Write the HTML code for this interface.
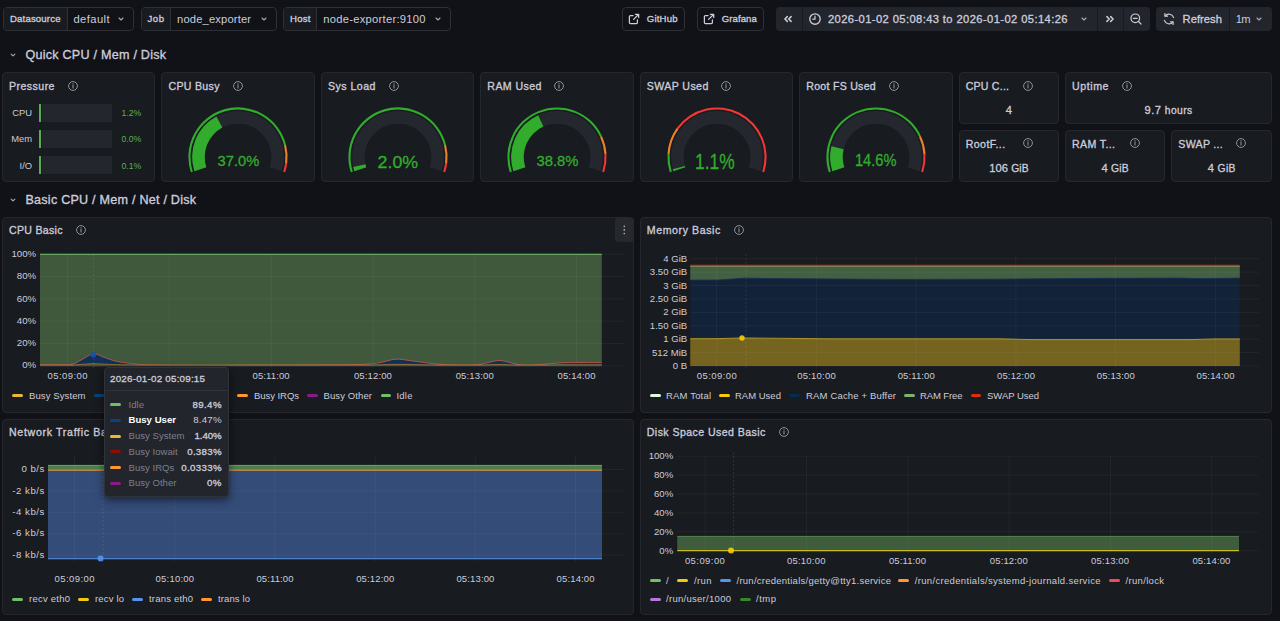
<!DOCTYPE html><html><head><meta charset="utf-8"><title>Node Exporter Full</title><style>html,body{margin:0;padding:0;background:#111217;}
body{width:1280px;height:621px;overflow:hidden;position:relative;font-family:"Liberation Sans", sans-serif;}
body>div,body>svg,body>span{position:absolute;box-sizing:border-box;}
body>span{white-space:pre;}
svg{overflow:visible;}</style></head><body><div style="left:3.00px;top:6.70px;width:131.40px;height:24.20px;background:#111217;border:1px solid #2e3036;border-radius:4px;"></div>
<div style="left:4.00px;top:7.7px;width:63.75px;height:22.20px;background:#181b1f;border-right:1px solid #2e3036;border-radius:3px 0 0 3px"></div>
<span id="t0" style="top:11.90px;font-size:9.6px;font-weight:400;color:rgb(204,204,220);line-height:14px;letter-spacing:0.160px;-webkit-text-stroke:0.32px rgb(204,204,220);left:10.00px;">Datasource</span>
<span id="t1" style="top:11.90px;font-size:11.2px;font-weight:400;color:rgb(204,204,220);line-height:14px;letter-spacing:0.401px;left:73.50px;">default</span>
<svg style="left:116.30px;top:14.20px;" width="10.00" height="10.00" viewBox="0 0 10.00 10.00"><path d="M3.00 4.00 L5 6.00 L7.00 4.00" fill="none" stroke="rgba(204,204,220,0.8)" stroke-width="1.1" stroke-linecap="round" stroke-linejoin="round"/></svg>
<div style="left:141.00px;top:6.70px;width:136.00px;height:24.20px;background:#111217;border:1px solid #2e3036;border-radius:4px;"></div>
<div style="left:142.00px;top:7.7px;width:29.00px;height:22.20px;background:#181b1f;border-right:1px solid #2e3036;border-radius:3px 0 0 3px"></div>
<span id="t2" style="top:11.90px;font-size:9.6px;font-weight:400;color:rgb(204,204,220);line-height:14px;letter-spacing:0.516px;-webkit-text-stroke:0.32px rgb(204,204,220);left:147.50px;">Job</span>
<span id="t3" style="top:11.90px;font-size:11.2px;font-weight:400;color:rgb(204,204,220);line-height:14px;letter-spacing:0.154px;left:177.00px;">node_exporter</span>
<svg style="left:258.70px;top:14.20px;" width="10.00" height="10.00" viewBox="0 0 10.00 10.00"><path d="M3.00 4.00 L5 6.00 L7.00 4.00" fill="none" stroke="rgba(204,204,220,0.8)" stroke-width="1.1" stroke-linecap="round" stroke-linejoin="round"/></svg>
<div style="left:283.00px;top:6.70px;width:167.50px;height:24.20px;background:#111217;border:1px solid #2e3036;border-radius:4px;"></div>
<div style="left:284.00px;top:7.7px;width:33.00px;height:22.20px;background:#181b1f;border-right:1px solid #2e3036;border-radius:3px 0 0 3px"></div>
<span id="t4" style="top:11.90px;font-size:9.6px;font-weight:400;color:rgb(204,204,220);line-height:14px;letter-spacing:0.255px;-webkit-text-stroke:0.32px rgb(204,204,220);left:290.00px;">Host</span>
<span id="t5" style="top:11.90px;font-size:11.2px;font-weight:400;color:rgb(204,204,220);line-height:14px;letter-spacing:0.270px;left:323.25px;">node-exporter:9100</span>
<svg style="left:432.50px;top:14.20px;" width="10.00" height="10.00" viewBox="0 0 10.00 10.00"><path d="M3.00 4.00 L5 6.00 L7.00 4.00" fill="none" stroke="rgba(204,204,220,0.8)" stroke-width="1.1" stroke-linecap="round" stroke-linejoin="round"/></svg>
<div style="left:622.00px;top:6.70px;width:62.50px;height:24.20px;background:#111217;border:1px solid #2e3036;border-radius:4px;"></div>
<svg style="left:628.30px;top:12.90px;" width="12.00" height="12.00" viewBox="0 0 12.00 12.00"><path d="M9.4 6.9V9.6a1 1 0 0 1-1 1H2.4a1 1 0 0 1-1-1V3.6a1 1 0 0 1 1-1H5.1" fill="none" stroke="rgb(204,204,220)" stroke-width="1.25" stroke-linecap="round"/><path d="M7.4 1.3H10.7V4.6M10.5 1.5L5.6 6.4" fill="none" stroke="rgb(204,204,220)" stroke-width="1.25" stroke-linecap="round" stroke-linejoin="round"/></svg>
<span id="t6" style="top:11.90px;font-size:9.6px;font-weight:400;color:rgb(204,204,220);line-height:14px;letter-spacing:0.178px;-webkit-text-stroke:0.32px rgb(204,204,220);left:646.75px;">GitHub</span>
<div style="left:696.50px;top:6.70px;width:67.50px;height:24.20px;background:#111217;border:1px solid #2e3036;border-radius:4px;"></div>
<svg style="left:703.30px;top:12.90px;" width="12.00" height="12.00" viewBox="0 0 12.00 12.00"><path d="M9.4 6.9V9.6a1 1 0 0 1-1 1H2.4a1 1 0 0 1-1-1V3.6a1 1 0 0 1 1-1H5.1" fill="none" stroke="rgb(204,204,220)" stroke-width="1.25" stroke-linecap="round"/><path d="M7.4 1.3H10.7V4.6M10.5 1.5L5.6 6.4" fill="none" stroke="rgb(204,204,220)" stroke-width="1.25" stroke-linecap="round" stroke-linejoin="round"/></svg>
<span id="t7" style="top:11.90px;font-size:9.6px;font-weight:400;color:rgb(204,204,220);line-height:14px;letter-spacing:0.055px;-webkit-text-stroke:0.32px rgb(204,204,220);left:721.75px;">Grafana</span>
<div style="left:775.50px;top:6.70px;width:374.50px;height:24.20px;background:#22252b;border-radius:4px;"></div>
<div style="left:801.5px;top:6.7px;width:1px;height:24.2px;background:#181b1f"></div>
<div style="left:1097px;top:6.7px;width:1px;height:24.2px;background:#181b1f"></div>
<div style="left:1123px;top:6.7px;width:1px;height:24.2px;background:#181b1f"></div>
<svg style="left:782.00px;top:12.90px;" width="12.00" height="12.00" viewBox="0 0 12.00 12.00"><path d="M5.30 3.60 L2.90 6 L5.30 8.40 M9.10 3.60 L6.70 6 L9.10 8.40" fill="none" stroke="rgb(204,204,220)" stroke-width="1.5" stroke-linecap="round" stroke-linejoin="round"/></svg>
<svg style="left:807.60px;top:11.90px;" width="14.00" height="14.00" viewBox="0 0 14.00 14.00"><circle cx="7" cy="7" r="5.2" fill="none" stroke="rgb(204,204,220)" stroke-width="1.35"/><path d="M7 4.1V7.2H4.8" fill="none" stroke="rgb(204,204,220)" stroke-width="1.2" stroke-linecap="round" stroke-linejoin="round"/></svg>
<span id="t8" style="top:11.90px;font-size:11.2px;font-weight:400;color:rgb(204,204,220);line-height:14px;letter-spacing:0.394px;-webkit-text-stroke:0.32px rgb(204,204,220);left:828.00px;">2026-01-02 05:08:43 to 2026-01-02 05:14:26</span>
<svg style="left:1079.20px;top:14.20px;" width="10.00" height="10.00" viewBox="0 0 10.00 10.00"><path d="M3.00 4.00 L5 6.00 L7.00 4.00" fill="none" stroke="rgba(204,204,220,0.8)" stroke-width="1.1" stroke-linecap="round" stroke-linejoin="round"/></svg>
<svg style="left:1103.60px;top:12.90px;" width="12.00" height="12.00" viewBox="0 0 12.00 12.00"><path d="M2.90 3.60 L5.30 6 L2.90 8.40 M6.70 3.60 L9.10 6 L6.70 8.40" fill="none" stroke="rgb(204,204,220)" stroke-width="1.5" stroke-linecap="round" stroke-linejoin="round"/></svg>
<svg style="left:1129.00px;top:12.10px;" width="14.00" height="14.00" viewBox="0 0 14.00 14.00"><circle cx="6.3" cy="6.3" r="4.3" fill="none" stroke="rgb(204,204,220)" stroke-width="1.2"/><path d="M9.5 9.5L12 12M4.4 6.3H8.2" fill="none" stroke="rgb(204,204,220)" stroke-width="1.2" stroke-linecap="round"/></svg>
<div style="left:1156.00px;top:6.70px;width:116.00px;height:24.20px;background:#22252b;border-radius:4px;"></div>
<div style="left:1229px;top:6.7px;width:1px;height:24.2px;background:#181b1f"></div>
<svg style="left:1162.00px;top:11.90px;" width="14.00" height="14.00" viewBox="0 0 14.00 14.00"><path d="M11.6 5.6A4.9 4.9 0 0 0 3.2 3.9M2.4 8.4A4.9 4.9 0 0 0 10.8 10.1" fill="none" stroke="rgb(204,204,220)" stroke-width="1.2" stroke-linecap="round"/><path d="M2.9 1.6V4.2H5.5M11.1 12.4V9.8H8.5" fill="none" stroke="rgb(204,204,220)" stroke-width="1.2" stroke-linecap="round" stroke-linejoin="round"/></svg>
<span id="t9" style="top:11.90px;font-size:11.2px;font-weight:400;color:rgb(204,204,220);line-height:14px;letter-spacing:0.052px;-webkit-text-stroke:0.32px rgb(204,204,220);left:1182.50px;">Refresh</span>
<span id="t10" style="top:11.90px;font-size:11.2px;font-weight:400;color:rgb(204,204,220);line-height:14px;letter-spacing:-0.600px;left:1235.75px;">1m</span>
<svg style="left:1253.80px;top:14.20px;" width="10.00" height="10.00" viewBox="0 0 10.00 10.00"><path d="M3.00 4.00 L5 6.00 L7.00 4.00" fill="none" stroke="rgba(204,204,220,0.8)" stroke-width="1.1" stroke-linecap="round" stroke-linejoin="round"/></svg>
<svg style="left:8.20px;top:50.30px;" width="10.00" height="10.00" viewBox="0 0 10.00 10.00"><path d="M3.10 4.05 L5 5.95 L6.90 4.05" fill="none" stroke="rgba(204,204,220,0.8)" stroke-width="1.1" stroke-linecap="round" stroke-linejoin="round"/></svg>
<span id="t11" style="top:47.80px;font-size:12.6px;font-weight:400;color:rgb(204,204,220);line-height:14px;letter-spacing:0.226px;-webkit-text-stroke:0.32px rgb(204,204,220);left:25.50px;">Quick CPU / Mem / Disk</span>
<svg style="left:8.20px;top:194.60px;" width="10.00" height="10.00" viewBox="0 0 10.00 10.00"><path d="M3.10 4.05 L5 5.95 L6.90 4.05" fill="none" stroke="rgba(204,204,220,0.8)" stroke-width="1.1" stroke-linecap="round" stroke-linejoin="round"/></svg>
<span id="t12" style="top:192.80px;font-size:12.6px;font-weight:400;color:rgb(204,204,220);line-height:14px;letter-spacing:0.224px;-webkit-text-stroke:0.32px rgb(204,204,220);left:25.50px;">Basic CPU / Mem / Net / Disk</span>
<div style="left:2.00px;top:72.25px;width:153.45px;height:109.35px;background:#181b1f;border:1px solid #25272d;border-radius:4px;"></div>
<span id="t13" style="top:78.85px;font-size:10.6px;font-weight:400;color:rgb(204,204,220);line-height:14px;letter-spacing:0.444px;-webkit-text-stroke:0.32px rgb(204,204,220);left:9.00px;">Pressure</span>
<svg style="left:67.20px;top:79.55px;" width="12.00" height="12.00" viewBox="0 0 12.00 12.00"><circle cx="6" cy="6" r="4.4" fill="none" stroke="rgba(204,204,220,0.65)" stroke-width="1"/><path d="M6 5.6V8" stroke="rgba(204,204,220,0.65)" stroke-width="1.1" stroke-linecap="round"/><circle cx="6" cy="4" r="0.65" fill="rgba(204,204,220,0.65)"/></svg>
<span id="t14" style="top:106.20px;font-size:9.4px;font-weight:400;color:rgb(204,204,220);line-height:14px;right:1247.90px;">CPU</span>
<div style="left:41.6px;top:104px;width:70.6px;height:18.2px;background:#23262d;border-radius:1px"></div>
<div style="left:38.7px;top:104px;width:2.6px;height:18.2px;background:rgb(86,176,80)"></div>
<span id="t15" style="top:106.20px;font-size:8.7px;font-weight:400;color:rgb(88,178,82);line-height:14px;right:1138.80px;">1.2%</span>
<span id="t16" style="top:132.20px;font-size:9.4px;font-weight:400;color:rgb(204,204,220);line-height:14px;right:1247.90px;">Mem</span>
<div style="left:41.6px;top:130px;width:70.6px;height:18.2px;background:#23262d;border-radius:1px"></div>
<div style="left:38.7px;top:130px;width:2.6px;height:18.2px;background:rgb(86,176,80)"></div>
<span id="t17" style="top:132.20px;font-size:8.7px;font-weight:400;color:rgb(88,178,82);line-height:14px;right:1138.80px;">0.0%</span>
<span id="t18" style="top:158.50px;font-size:9.4px;font-weight:400;color:rgb(204,204,220);line-height:14px;right:1247.90px;">I/O</span>
<div style="left:41.6px;top:156.3px;width:70.6px;height:18.2px;background:#23262d;border-radius:1px"></div>
<div style="left:38.7px;top:156.3px;width:2.6px;height:18.2px;background:rgb(86,176,80)"></div>
<span id="t19" style="top:158.50px;font-size:8.7px;font-weight:400;color:rgb(88,178,82);line-height:14px;right:1138.80px;">0.1%</span>
<div style="left:161.45px;top:72.25px;width:153.45px;height:109.35px;background:#181b1f;border:1px solid #25272d;border-radius:4px;"></div>
<span id="t20" style="top:78.85px;font-size:10.6px;font-weight:400;color:rgb(204,204,220);line-height:14px;letter-spacing:0.304px;-webkit-text-stroke:0.32px rgb(204,204,220);left:168.45px;">CPU Busy</span>
<svg style="left:232.40px;top:79.55px;" width="12.00" height="12.00" viewBox="0 0 12.00 12.00"><circle cx="6" cy="6" r="4.4" fill="none" stroke="rgba(204,204,220,0.65)" stroke-width="1"/><path d="M6 5.6V8" stroke="rgba(204,204,220,0.65)" stroke-width="1.1" stroke-linecap="round"/><circle cx="6" cy="4" r="0.65" fill="rgba(204,204,220,0.65)"/></svg>
<svg style="left:183.32px;top:104.60px;" width="110.00" height="80.00" viewBox="0 0 110.00 80.00"><path d="M11.35 66.18 A45.9 45.9 0 1 1 98.65 66.18 L86.67 62.29 A33.3 33.3 0 1 0 23.33 62.29 Z" fill="#25272e"/><path d="M11.35 66.18 A45.9 45.9 0 0 1 33.39 11.50 L39.33 22.62 A33.3 33.3 0 0 0 23.33 62.29 Z" fill="rgb(50,172,45)"/><path d="M7.83 67.33 A49.6 49.6 0 1 1 103.04 39.66 L101.01 40.19 A47.5 47.5 0 1 0 9.82 66.68 Z" fill="rgb(50,172,45)"/><path d="M103.04 39.66 A49.6 49.6 0 0 1 104.21 58.22 L102.13 57.95 A47.5 47.5 0 0 0 101.01 40.19 Z" fill="rgb(237,129,40)"/><path d="M104.21 58.22 A49.6 49.6 0 0 1 102.17 67.33 L100.18 66.68 A47.5 47.5 0 0 0 102.13 57.95 Z" fill="rgb(245,54,54)"/></svg>
<span id="t21" style="top:153.90px;font-size:14.4px;font-weight:400;color:rgb(50,172,45);line-height:14px;left:88.02px;width:300px;text-align:center;-webkit-text-stroke:0.3px rgb(50,172,45);"><span style="display:inline-block;transform:scaleX(1.019);transform-origin:50% 50%">37.0%</span></span>
<div style="left:320.90px;top:72.25px;width:153.45px;height:109.35px;background:#181b1f;border:1px solid #25272d;border-radius:4px;"></div>
<span id="t22" style="top:78.85px;font-size:10.6px;font-weight:400;color:rgb(204,204,220);line-height:14px;letter-spacing:0.475px;-webkit-text-stroke:0.32px rgb(204,204,220);left:327.90px;">Sys Load</span>
<svg style="left:387.60px;top:79.55px;" width="12.00" height="12.00" viewBox="0 0 12.00 12.00"><circle cx="6" cy="6" r="4.4" fill="none" stroke="rgba(204,204,220,0.65)" stroke-width="1"/><path d="M6 5.6V8" stroke="rgba(204,204,220,0.65)" stroke-width="1.1" stroke-linecap="round"/><circle cx="6" cy="4" r="0.65" fill="rgba(204,204,220,0.65)"/></svg>
<svg style="left:342.77px;top:104.60px;" width="110.00" height="80.00" viewBox="0 0 110.00 80.00"><path d="M11.35 66.18 A45.9 45.9 0 1 1 98.65 66.18 L86.67 62.29 A33.3 33.3 0 1 0 23.33 62.29 Z" fill="#25272e"/><path d="M11.35 66.18 A45.9 45.9 0 0 1 10.21 62.01 L22.50 59.26 A33.3 33.3 0 0 0 23.33 62.29 Z" fill="rgb(50,172,45)"/><path d="M7.83 67.33 A49.6 49.6 0 1 1 103.04 39.66 L101.01 40.19 A47.5 47.5 0 1 0 9.82 66.68 Z" fill="rgb(50,172,45)"/><path d="M103.04 39.66 A49.6 49.6 0 0 1 104.21 58.22 L102.13 57.95 A47.5 47.5 0 0 0 101.01 40.19 Z" fill="rgb(237,129,40)"/><path d="M104.21 58.22 A49.6 49.6 0 0 1 102.17 67.33 L100.18 66.68 A47.5 47.5 0 0 0 102.13 57.95 Z" fill="rgb(245,54,54)"/></svg>
<span id="t23" style="top:154.60px;font-size:17.4px;font-weight:400;color:rgb(50,172,45);line-height:14px;left:247.47px;width:300px;text-align:center;-webkit-text-stroke:0.3px rgb(50,172,45);"><span style="display:inline-block;transform:scaleX(1.022);transform-origin:50% 50%">2.0%</span></span>
<div style="left:480.35px;top:72.25px;width:153.45px;height:109.35px;background:#181b1f;border:1px solid #25272d;border-radius:4px;"></div>
<span id="t24" style="top:78.85px;font-size:10.6px;font-weight:400;color:rgb(204,204,220);line-height:14px;letter-spacing:0.397px;-webkit-text-stroke:0.32px rgb(204,204,220);left:487.35px;">RAM Used</span>
<svg style="left:553.30px;top:79.55px;" width="12.00" height="12.00" viewBox="0 0 12.00 12.00"><circle cx="6" cy="6" r="4.4" fill="none" stroke="rgba(204,204,220,0.65)" stroke-width="1"/><path d="M6 5.6V8" stroke="rgba(204,204,220,0.65)" stroke-width="1.1" stroke-linecap="round"/><circle cx="6" cy="4" r="0.65" fill="rgba(204,204,220,0.65)"/></svg>
<svg style="left:502.22px;top:104.60px;" width="110.00" height="80.00" viewBox="0 0 110.00 80.00"><path d="M11.35 66.18 A45.9 45.9 0 1 1 98.65 66.18 L86.67 62.29 A33.3 33.3 0 1 0 23.33 62.29 Z" fill="#25272e"/><path d="M11.35 66.18 A45.9 45.9 0 0 1 36.19 10.13 L41.35 21.62 A33.3 33.3 0 0 0 23.33 62.29 Z" fill="rgb(50,172,45)"/><path d="M7.83 67.33 A49.6 49.6 0 0 1 99.88 30.88 L97.98 31.78 A47.5 47.5 0 0 0 9.82 66.68 Z" fill="rgb(50,172,45)"/><path d="M99.88 30.88 A49.6 49.6 0 0 1 104.50 48.89 L102.41 49.02 A47.5 47.5 0 0 0 97.98 31.78 Z" fill="rgb(237,129,40)"/><path d="M104.50 48.89 A49.6 49.6 0 0 1 102.17 67.33 L100.18 66.68 A47.5 47.5 0 0 0 102.41 49.02 Z" fill="rgb(245,54,54)"/></svg>
<span id="t25" style="top:153.90px;font-size:14.4px;font-weight:400;color:rgb(50,172,45);line-height:14px;left:406.92px;width:300px;text-align:center;-webkit-text-stroke:0.3px rgb(50,172,45);"><span style="display:inline-block;transform:scaleX(1.029);transform-origin:50% 50%">38.8%</span></span>
<div style="left:639.80px;top:72.25px;width:153.45px;height:109.35px;background:#181b1f;border:1px solid #25272d;border-radius:4px;"></div>
<span id="t26" style="top:78.85px;font-size:10.6px;font-weight:400;color:rgb(204,204,220);line-height:14px;letter-spacing:0.400px;-webkit-text-stroke:0.32px rgb(204,204,220);left:646.80px;">SWAP Used</span>
<svg style="left:720.00px;top:79.55px;" width="12.00" height="12.00" viewBox="0 0 12.00 12.00"><circle cx="6" cy="6" r="4.4" fill="none" stroke="rgba(204,204,220,0.65)" stroke-width="1"/><path d="M6 5.6V8" stroke="rgba(204,204,220,0.65)" stroke-width="1.1" stroke-linecap="round"/><circle cx="6" cy="4" r="0.65" fill="rgba(204,204,220,0.65)"/></svg>
<svg style="left:661.67px;top:104.60px;" width="110.00" height="80.00" viewBox="0 0 110.00 80.00"><path d="M11.35 66.18 A45.9 45.9 0 1 1 98.65 66.18 L86.67 62.29 A33.3 33.3 0 1 0 23.33 62.29 Z" fill="#25272e"/><path d="M11.35 66.18 A45.9 45.9 0 0 1 10.80 64.36 L22.93 60.97 A33.3 33.3 0 0 0 23.33 62.29 Z" fill="rgb(50,172,45)"/><path d="M7.83 67.33 A49.6 49.6 0 0 1 5.50 48.89 L7.59 49.02 A47.5 47.5 0 0 0 9.82 66.68 Z" fill="rgb(50,172,45)"/><path d="M5.50 48.89 A49.6 49.6 0 0 1 14.87 22.85 L16.57 24.08 A47.5 47.5 0 0 0 7.59 49.02 Z" fill="rgb(237,129,40)"/><path d="M14.87 22.85 A49.6 49.6 0 0 1 102.17 67.33 L100.18 66.68 A47.5 47.5 0 0 0 16.57 24.08 Z" fill="rgb(245,54,54)"/></svg>
<span id="t27" style="top:155.00px;font-size:21.8px;font-weight:400;color:rgb(50,172,45);line-height:14px;left:565.27px;width:300px;text-align:center;-webkit-text-stroke:0.3px rgb(50,172,45);"><span style="display:inline-block;transform:scaleX(0.797);transform-origin:50% 50%">1.1%</span></span>
<div style="left:799.25px;top:72.25px;width:153.45px;height:109.35px;background:#181b1f;border:1px solid #25272d;border-radius:4px;"></div>
<span id="t28" style="top:78.85px;font-size:10.6px;font-weight:400;color:rgb(204,204,220);line-height:14px;letter-spacing:0.268px;-webkit-text-stroke:0.32px rgb(204,204,220);left:806.25px;">Root FS Used</span>
<svg style="left:888.30px;top:79.55px;" width="12.00" height="12.00" viewBox="0 0 12.00 12.00"><circle cx="6" cy="6" r="4.4" fill="none" stroke="rgba(204,204,220,0.65)" stroke-width="1"/><path d="M6 5.6V8" stroke="rgba(204,204,220,0.65)" stroke-width="1.1" stroke-linecap="round"/><circle cx="6" cy="4" r="0.65" fill="rgba(204,204,220,0.65)"/></svg>
<svg style="left:821.12px;top:104.60px;" width="110.00" height="80.00" viewBox="0 0 110.00 80.00"><path d="M11.35 66.18 A45.9 45.9 0 1 1 98.65 66.18 L86.67 62.29 A33.3 33.3 0 1 0 23.33 62.29 Z" fill="#25272e"/><path d="M11.35 66.18 A45.9 45.9 0 0 1 10.37 41.26 L22.62 44.21 A33.3 33.3 0 0 0 23.33 62.29 Z" fill="rgb(50,172,45)"/><path d="M7.83 67.33 A49.6 49.6 0 0 1 99.88 30.88 L97.98 31.78 A47.5 47.5 0 0 0 9.82 66.68 Z" fill="rgb(50,172,45)"/><path d="M99.88 30.88 A49.6 49.6 0 0 1 104.50 48.89 L102.41 49.02 A47.5 47.5 0 0 0 97.98 31.78 Z" fill="rgb(237,129,40)"/><path d="M104.50 48.89 A49.6 49.6 0 0 1 102.17 67.33 L100.18 66.68 A47.5 47.5 0 0 0 102.41 49.02 Z" fill="rgb(245,54,54)"/></svg>
<span id="t29" style="top:154.10px;font-size:16.0px;font-weight:400;color:rgb(50,172,45);line-height:14px;left:725.23px;width:300px;text-align:center;-webkit-text-stroke:0.3px rgb(50,172,45);"><span style="display:inline-block;transform:scaleX(0.912);transform-origin:50% 50%">14.6%</span></span>
<div style="left:958.70px;top:72.25px;width:100.30px;height:51.50px;background:#181b1f;border:1px solid #25272d;border-radius:4px;"></div>
<span id="t30" style="top:78.85px;font-size:10.6px;font-weight:400;color:rgb(204,204,220);line-height:14px;letter-spacing:0.215px;-webkit-text-stroke:0.32px rgb(204,204,220);left:965.70px;">CPU C...</span>
<svg style="left:1022.00px;top:79.55px;" width="12.00" height="12.00" viewBox="0 0 12.00 12.00"><circle cx="6" cy="6" r="4.4" fill="none" stroke="rgba(204,204,220,0.65)" stroke-width="1"/><path d="M6 5.6V8" stroke="rgba(204,204,220,0.65)" stroke-width="1.1" stroke-linecap="round"/><circle cx="6" cy="4" r="0.65" fill="rgba(204,204,220,0.65)"/></svg>
<span id="t31" style="top:103.45px;font-size:11px;font-weight:400;color:rgb(204,204,220);line-height:14px;-webkit-text-stroke:0.32px rgb(204,204,220);left:858.80px;width:300px;text-align:center;"><span style="font-size:11.2px">4</span></span>
<div style="left:1065.00px;top:72.25px;width:206.60px;height:51.50px;background:#181b1f;border:1px solid #25272d;border-radius:4px;"></div>
<span id="t32" style="top:78.85px;font-size:10.6px;font-weight:400;color:rgb(204,204,220);line-height:14px;letter-spacing:0.588px;-webkit-text-stroke:0.32px rgb(204,204,220);left:1072.00px;">Uptime</span>
<svg style="left:1121.00px;top:79.55px;" width="12.00" height="12.00" viewBox="0 0 12.00 12.00"><circle cx="6" cy="6" r="4.4" fill="none" stroke="rgba(204,204,220,0.65)" stroke-width="1"/><path d="M6 5.6V8" stroke="rgba(204,204,220,0.65)" stroke-width="1.1" stroke-linecap="round"/><circle cx="6" cy="4" r="0.65" fill="rgba(204,204,220,0.65)"/></svg>
<span id="t33" style="top:103.45px;font-size:11px;font-weight:400;color:rgb(204,204,220);line-height:14px;letter-spacing:0.439px;-webkit-text-stroke:0.32px rgb(204,204,220);left:1018.67px;width:300px;text-align:center;"><span style="font-size:11.2px">9.7</span><span style="font-size:10.3px"> hours</span></span>
<div style="left:958.70px;top:130.00px;width:100.30px;height:51.60px;background:#181b1f;border:1px solid #25272d;border-radius:4px;"></div>
<span id="t34" style="top:136.60px;font-size:10.6px;font-weight:400;color:rgb(204,204,220);line-height:14px;letter-spacing:0.426px;-webkit-text-stroke:0.32px rgb(204,204,220);left:965.70px;">RootF...</span>
<svg style="left:1022.00px;top:137.30px;" width="12.00" height="12.00" viewBox="0 0 12.00 12.00"><circle cx="6" cy="6" r="4.4" fill="none" stroke="rgba(204,204,220,0.65)" stroke-width="1"/><path d="M6 5.6V8" stroke="rgba(204,204,220,0.65)" stroke-width="1.1" stroke-linecap="round"/><circle cx="6" cy="4" r="0.65" fill="rgba(204,204,220,0.65)"/></svg>
<span id="t35" style="top:161.20px;font-size:11px;font-weight:400;color:rgb(204,204,220);line-height:14px;letter-spacing:0.116px;-webkit-text-stroke:0.32px rgb(204,204,220);left:858.96px;width:300px;text-align:center;"><span style="font-size:11.2px">106</span><span style="font-size:10.3px"> GiB</span></span>
<div style="left:1065.00px;top:130.00px;width:100.30px;height:51.60px;background:#181b1f;border:1px solid #25272d;border-radius:4px;"></div>
<span id="t36" style="top:136.60px;font-size:10.6px;font-weight:400;color:rgb(204,204,220);line-height:14px;letter-spacing:0.368px;-webkit-text-stroke:0.32px rgb(204,204,220);left:1072.00px;">RAM T...</span>
<svg style="left:1128.60px;top:137.30px;" width="12.00" height="12.00" viewBox="0 0 12.00 12.00"><circle cx="6" cy="6" r="4.4" fill="none" stroke="rgba(204,204,220,0.65)" stroke-width="1"/><path d="M6 5.6V8" stroke="rgba(204,204,220,0.65)" stroke-width="1.1" stroke-linecap="round"/><circle cx="6" cy="4" r="0.65" fill="rgba(204,204,220,0.65)"/></svg>
<span id="t37" style="top:161.20px;font-size:11px;font-weight:400;color:rgb(204,204,220);line-height:14px;letter-spacing:0.209px;-webkit-text-stroke:0.32px rgb(204,204,220);left:965.25px;width:300px;text-align:center;"><span style="font-size:11.2px">4</span><span style="font-size:10.3px"> GiB</span></span>
<div style="left:1171.30px;top:130.00px;width:100.30px;height:51.60px;background:#181b1f;border:1px solid #25272d;border-radius:4px;"></div>
<span id="t38" style="top:136.60px;font-size:10.6px;font-weight:400;color:rgb(204,204,220);line-height:14px;letter-spacing:0.301px;-webkit-text-stroke:0.32px rgb(204,204,220);left:1178.30px;">SWAP ...</span>
<svg style="left:1234.80px;top:137.30px;" width="12.00" height="12.00" viewBox="0 0 12.00 12.00"><circle cx="6" cy="6" r="4.4" fill="none" stroke="rgba(204,204,220,0.65)" stroke-width="1"/><path d="M6 5.6V8" stroke="rgba(204,204,220,0.65)" stroke-width="1.1" stroke-linecap="round"/><circle cx="6" cy="4" r="0.65" fill="rgba(204,204,220,0.65)"/></svg>
<span id="t39" style="top:161.20px;font-size:11px;font-weight:400;color:rgb(204,204,220);line-height:14px;letter-spacing:0.334px;-webkit-text-stroke:0.32px rgb(204,204,220);left:1071.77px;width:300px;text-align:center;"><span style="font-size:11.2px">4</span><span style="font-size:10.3px"> GiB</span></span>
<div style="left:2.00px;top:216.80px;width:631.80px;height:196.20px;background:#181b1f;border:1px solid #25272d;border-radius:4px;"></div>
<span id="t40" style="top:223.10px;font-size:10.6px;font-weight:400;color:rgb(204,204,220);line-height:14px;letter-spacing:0.285px;-webkit-text-stroke:0.32px rgb(204,204,220);left:9.00px;">CPU Basic</span>
<svg style="left:75.20px;top:223.80px;" width="12.00" height="12.00" viewBox="0 0 12.00 12.00"><circle cx="6" cy="6" r="4.4" fill="none" stroke="rgba(204,204,220,0.65)" stroke-width="1"/><path d="M6 5.6V8" stroke="rgba(204,204,220,0.65)" stroke-width="1.1" stroke-linecap="round"/><circle cx="6" cy="4" r="0.65" fill="rgba(204,204,220,0.65)"/></svg>
<div style="left:615.00px;top:217.80px;width:19.00px;height:23.80px;background:#26282e;border-radius:3px;"></div>
<svg style="left:615.00px;top:217.80px;" width="19.00" height="23.80" viewBox="0 0 19.00 23.80"><circle cx="9.3" cy="8.3" r="0.85" fill="rgba(204,204,220,0.8)"/><circle cx="9.3" cy="11.9" r="0.85" fill="rgba(204,204,220,0.8)"/><circle cx="9.3" cy="15.5" r="0.85" fill="rgba(204,204,220,0.8)"/></svg>
<span id="t41" style="top:246.90px;font-size:9.7px;font-weight:400;color:rgb(204,204,220);line-height:14px;right:1243.80px;">100%</span>
<span id="t42" style="top:269.20px;font-size:9.7px;font-weight:400;color:rgb(204,204,220);line-height:14px;right:1243.80px;">80%</span>
<span id="t43" style="top:291.50px;font-size:9.7px;font-weight:400;color:rgb(204,204,220);line-height:14px;right:1243.80px;">60%</span>
<span id="t44" style="top:313.80px;font-size:9.7px;font-weight:400;color:rgb(204,204,220);line-height:14px;right:1243.80px;">40%</span>
<span id="t45" style="top:336.10px;font-size:9.7px;font-weight:400;color:rgb(204,204,220);line-height:14px;right:1243.80px;">20%</span>
<span id="t46" style="top:358.40px;font-size:9.7px;font-weight:400;color:rgb(204,204,220);line-height:14px;right:1243.80px;">0%</span>
<svg style="left:0;top:0" width="1280" height="621" viewBox="0 0 1280 621"><rect x="40" y="254.25" width="561.75" height="111.5" fill="rgb(64,89,61)"/><path d="M40 254.25H601.75" stroke="rgb(115,191,105)" stroke-width="1.1"/><path d="M67.50 254.25V368.75" stroke="rgba(204,204,220,0.06)" stroke-width="1"/><path d="M169.30 254.25V368.75" stroke="rgba(204,204,220,0.06)" stroke-width="1"/><path d="M271.10 254.25V368.75" stroke="rgba(204,204,220,0.06)" stroke-width="1"/><path d="M372.90 254.25V368.75" stroke="rgba(204,204,220,0.06)" stroke-width="1"/><path d="M474.70 254.25V368.75" stroke="rgba(204,204,220,0.06)" stroke-width="1"/><path d="M576.50 254.25V368.75" stroke="rgba(204,204,220,0.06)" stroke-width="1"/><path d="M40.00 254.25H624.00" stroke="rgba(204,204,220,0.06)" stroke-width="1"/><path d="M40.00 276.55H624.00" stroke="rgba(204,204,220,0.06)" stroke-width="1"/><path d="M40.00 298.85H624.00" stroke="rgba(204,204,220,0.06)" stroke-width="1"/><path d="M40.00 321.15H624.00" stroke="rgba(204,204,220,0.06)" stroke-width="1"/><path d="M40.00 343.45H624.00" stroke="rgba(204,204,220,0.06)" stroke-width="1"/><path d="M40.00 365.75H624.00" stroke="rgba(204,204,220,0.06)" stroke-width="1"/><path d="M40.00 364.80 C43.33 364.80 54.67 364.87 60.00 364.80 C65.33 364.73 68.33 365.28 72.00 364.40 C75.67 363.52 78.45 361.27 82.00 359.50 C85.55 357.73 89.63 354.17 93.30 353.80 C96.97 353.43 100.10 356.03 104.00 357.30 C107.90 358.57 111.53 360.30 116.70 361.40 C121.87 362.50 129.12 363.32 135.00 363.90 C140.88 364.48 141.17 364.67 152.00 364.90 C162.83 365.13 182.00 365.25 200.00 365.30 C218.00 365.35 238.33 365.27 260.00 365.20 C281.67 365.13 312.50 365.05 330.00 364.90 C347.50 364.75 356.67 364.68 365.00 364.30 C373.33 363.92 374.90 363.45 380.00 362.60 C385.10 361.75 390.60 359.53 395.60 359.20 C400.60 358.87 405.10 360.03 410.00 360.60 C414.90 361.17 420.00 361.97 425.00 362.60 C430.00 363.23 434.17 363.98 440.00 364.40 C445.83 364.82 453.67 365.05 460.00 365.10 C466.33 365.15 473.33 365.12 478.00 364.70 C482.67 364.28 484.55 363.30 488.00 362.60 C491.45 361.90 495.37 360.60 498.70 360.50 C502.03 360.40 504.78 361.32 508.00 362.00 C511.22 362.68 514.33 364.07 518.00 364.60 C521.67 365.13 525.50 365.27 530.00 365.20 C534.50 365.13 539.33 364.62 545.00 364.20 C550.67 363.78 557.33 362.98 564.00 362.70 C570.67 362.42 578.71 362.53 585.00 362.50 C591.29 362.47 598.96 362.50 601.75 362.50 L601.75 366.2 L40 366.2 Z" fill="rgb(17,48,88)"/><path d="M40.00 364.80 C43.33 364.80 54.67 364.87 60.00 364.80 C65.33 364.73 68.33 365.28 72.00 364.40 C75.67 363.52 78.45 361.27 82.00 359.50 C85.55 357.73 89.63 354.17 93.30 353.80 C96.97 353.43 100.10 356.03 104.00 357.30 C107.90 358.57 111.53 360.30 116.70 361.40 C121.87 362.50 129.12 363.32 135.00 363.90 C140.88 364.48 141.17 364.67 152.00 364.90 C162.83 365.13 182.00 365.25 200.00 365.30 C218.00 365.35 238.33 365.27 260.00 365.20 C281.67 365.13 312.50 365.05 330.00 364.90 C347.50 364.75 356.67 364.68 365.00 364.30 C373.33 363.92 374.90 363.45 380.00 362.60 C385.10 361.75 390.60 359.53 395.60 359.20 C400.60 358.87 405.10 360.03 410.00 360.60 C414.90 361.17 420.00 361.97 425.00 362.60 C430.00 363.23 434.17 363.98 440.00 364.40 C445.83 364.82 453.67 365.05 460.00 365.10 C466.33 365.15 473.33 365.12 478.00 364.70 C482.67 364.28 484.55 363.30 488.00 362.60 C491.45 361.90 495.37 360.60 498.70 360.50 C502.03 360.40 504.78 361.32 508.00 362.00 C511.22 362.68 514.33 364.07 518.00 364.60 C521.67 365.13 525.50 365.27 530.00 365.20 C534.50 365.13 539.33 364.62 545.00 364.20 C550.67 363.78 557.33 362.98 564.00 362.70 C570.67 362.42 578.71 362.53 585.00 362.50 C591.29 362.47 598.96 362.50 601.75 362.50" fill="none" stroke="rgb(190,84,78)" stroke-width="0.9"/><path d="M40.00 365.03 C43.33 365.03 54.67 365.04 60.00 365.03 C65.33 365.02 68.33 365.09 72.00 364.98 C75.67 364.88 78.45 364.61 82.00 364.40 C85.55 364.18 89.63 363.76 93.30 363.71 C96.97 363.67 100.10 363.98 104.00 364.13 C107.90 364.28 111.53 364.49 116.70 364.62 C121.87 364.76 129.12 364.85 135.00 364.92 C140.88 364.99 141.17 365.02 152.00 365.04 C162.83 365.07 182.00 365.09 200.00 365.09 C218.00 365.10 238.33 365.09 260.00 365.08 C281.67 365.07 312.50 365.06 330.00 365.04 C347.50 365.03 356.67 365.02 365.00 364.97 C373.33 364.93 374.90 364.87 380.00 364.77 C385.10 364.67 390.60 364.40 395.60 364.36 C400.60 364.32 405.10 364.46 410.00 364.53 C414.90 364.60 420.00 364.69 425.00 364.77 C430.00 364.84 434.17 364.93 440.00 364.98 C445.83 365.03 453.67 365.06 460.00 365.07 C466.33 365.07 473.33 365.07 478.00 365.02 C482.67 364.97 484.55 364.85 488.00 364.77 C491.45 364.68 495.37 364.53 498.70 364.52 C502.03 364.50 504.78 364.61 508.00 364.70 C511.22 364.78 514.33 364.94 518.00 365.01 C521.67 365.07 525.50 365.09 530.00 365.08 C534.50 365.07 539.33 365.01 545.00 364.96 C550.67 364.91 557.33 364.81 564.00 364.78 C570.67 364.75 578.71 364.76 585.00 364.76 C591.29 364.75 598.96 364.76 601.75 364.76 L601.75 366.2 L40 366.2 Z" fill="rgb(84,76,44)"/><path d="M40.00 365.03 C43.33 365.03 54.67 365.04 60.00 365.03 C65.33 365.02 68.33 365.09 72.00 364.98 C75.67 364.88 78.45 364.61 82.00 364.40 C85.55 364.18 89.63 363.76 93.30 363.71 C96.97 363.67 100.10 363.98 104.00 364.13 C107.90 364.28 111.53 364.49 116.70 364.62 C121.87 364.76 129.12 364.85 135.00 364.92 C140.88 364.99 141.17 365.02 152.00 365.04 C162.83 365.07 182.00 365.09 200.00 365.09 C218.00 365.10 238.33 365.09 260.00 365.08 C281.67 365.07 312.50 365.06 330.00 365.04 C347.50 365.03 356.67 365.02 365.00 364.97 C373.33 364.93 374.90 364.87 380.00 364.77 C385.10 364.67 390.60 364.40 395.60 364.36 C400.60 364.32 405.10 364.46 410.00 364.53 C414.90 364.60 420.00 364.69 425.00 364.77 C430.00 364.84 434.17 364.93 440.00 364.98 C445.83 365.03 453.67 365.06 460.00 365.07 C466.33 365.07 473.33 365.07 478.00 365.02 C482.67 364.97 484.55 364.85 488.00 364.77 C491.45 364.68 495.37 364.53 498.70 364.52 C502.03 364.50 504.78 364.61 508.00 364.70 C511.22 364.78 514.33 364.94 518.00 365.01 C521.67 365.07 525.50 365.09 530.00 365.08 C534.50 365.07 539.33 365.01 545.00 364.96 C550.67 364.91 557.33 364.81 564.00 364.78 C570.67 364.75 578.71 364.76 585.00 364.76 C591.29 364.75 598.96 364.76 601.75 364.76" fill="none" stroke="rgb(205,150,56)" stroke-width="0.7" stroke-opacity="0.8"/><path d="M93.5 254.25V368.75" stroke="rgba(204,204,220,0.13)" stroke-width="1" stroke-dasharray="2 2"/><circle cx="93.4" cy="354.8" r="2.8" fill="rgb(20,84,172)" fill-opacity="0.9"/></svg>
<span id="t47" style="top:369.20px;font-size:9.5px;font-weight:400;color:rgb(204,204,220);line-height:14px;letter-spacing:0.431px;left:-82.28px;width:300px;text-align:center;">05:09:00</span>
<span id="t48" style="top:369.20px;font-size:9.5px;font-weight:400;color:rgb(204,204,220);line-height:14px;letter-spacing:0.217px;left:19.41px;width:300px;text-align:center;">05:10:00</span>
<span id="t49" style="top:369.20px;font-size:9.5px;font-weight:400;color:rgb(204,204,220);line-height:14px;letter-spacing:0.103px;left:121.15px;width:300px;text-align:center;">05:11:00</span>
<span id="t50" style="top:369.20px;font-size:9.5px;font-weight:400;color:rgb(204,204,220);line-height:14px;letter-spacing:0.145px;left:222.97px;width:300px;text-align:center;">05:12:00</span>
<span id="t51" style="top:369.20px;font-size:9.5px;font-weight:400;color:rgb(204,204,220);line-height:14px;letter-spacing:0.145px;left:324.77px;width:300px;text-align:center;">05:13:00</span>
<span id="t52" style="top:369.20px;font-size:9.5px;font-weight:400;color:rgb(204,204,220);line-height:14px;letter-spacing:0.145px;left:426.57px;width:300px;text-align:center;">05:14:00</span>
<div style="left:12.20px;top:394.40px;width:10.8px;height:3px;border-radius:1.5px;background:#EAB839"></div>
<span id="t53" style="top:388.80px;font-size:9.5px;font-weight:400;color:rgb(204,204,220);line-height:14px;letter-spacing:0.106px;left:29.00px;">Busy System</span>
<div style="left:94.00px;top:394.40px;width:10.8px;height:3px;border-radius:1.5px;background:#0A437C"></div>
<span id="t54" style="top:388.80px;font-size:9.5px;font-weight:400;color:rgb(204,204,220);line-height:14px;letter-spacing:-0.041px;left:110.50px;">Busy User</span>
<div style="left:163.00px;top:394.40px;width:10.8px;height:3px;border-radius:1.5px;background:#890F02"></div>
<span id="t55" style="top:388.80px;font-size:9.5px;font-weight:400;color:rgb(204,204,220);line-height:14px;letter-spacing:0.042px;left:179.50px;">Busy Iowait</span>
<div style="left:237.20px;top:394.40px;width:10.8px;height:3px;border-radius:1.5px;background:#FF9830"></div>
<span id="t56" style="top:388.80px;font-size:9.5px;font-weight:400;color:rgb(204,204,220);line-height:14px;letter-spacing:-0.051px;left:254.00px;">Busy IRQs</span>
<div style="left:307.30px;top:394.40px;width:10.8px;height:3px;border-radius:1.5px;background:#8a1a86"></div>
<span id="t57" style="top:388.80px;font-size:9.5px;font-weight:400;color:rgb(204,204,220);line-height:14px;letter-spacing:0.108px;left:323.50px;">Busy Other</span>
<div style="left:380.50px;top:394.40px;width:10.8px;height:3px;border-radius:1.5px;background:#73BF69"></div>
<span id="t58" style="top:388.80px;font-size:9.5px;font-weight:400;color:rgb(204,204,220);line-height:14px;letter-spacing:0.224px;left:396.50px;">Idle</span>
<div style="left:639.80px;top:216.80px;width:631.80px;height:196.20px;background:#181b1f;border:1px solid #25272d;border-radius:4px;"></div>
<span id="t59" style="top:223.10px;font-size:10.6px;font-weight:400;color:rgb(204,204,220);line-height:14px;letter-spacing:0.581px;-webkit-text-stroke:0.32px rgb(204,204,220);left:646.80px;">Memory Basic</span>
<svg style="left:733.00px;top:223.80px;" width="12.00" height="12.00" viewBox="0 0 12.00 12.00"><circle cx="6" cy="6" r="4.4" fill="none" stroke="rgba(204,204,220,0.65)" stroke-width="1"/><path d="M6 5.6V8" stroke="rgba(204,204,220,0.65)" stroke-width="1.1" stroke-linecap="round"/><circle cx="6" cy="4" r="0.65" fill="rgba(204,204,220,0.65)"/></svg>
<span id="t60" style="top:251.75px;font-size:9.6px;font-weight:400;color:rgb(204,204,220);line-height:14px;right:592.80px;">4 GiB</span>
<span id="t61" style="top:265.15px;font-size:9.6px;font-weight:400;color:rgb(204,204,220);line-height:14px;right:592.80px;">3.50 GiB</span>
<span id="t62" style="top:278.55px;font-size:9.6px;font-weight:400;color:rgb(204,204,220);line-height:14px;right:592.80px;">3 GiB</span>
<span id="t63" style="top:291.95px;font-size:9.6px;font-weight:400;color:rgb(204,204,220);line-height:14px;right:592.80px;">2.50 GiB</span>
<span id="t64" style="top:305.35px;font-size:9.6px;font-weight:400;color:rgb(204,204,220);line-height:14px;right:592.80px;">2 GiB</span>
<span id="t65" style="top:318.75px;font-size:9.6px;font-weight:400;color:rgb(204,204,220);line-height:14px;right:592.80px;">1.50 GiB</span>
<span id="t66" style="top:332.15px;font-size:9.6px;font-weight:400;color:rgb(204,204,220);line-height:14px;right:592.80px;">1 GiB</span>
<span id="t67" style="top:345.55px;font-size:9.6px;font-weight:400;color:rgb(204,204,220);line-height:14px;right:592.80px;">512 MiB</span>
<span id="t68" style="top:358.95px;font-size:9.6px;font-weight:400;color:rgb(204,204,220);line-height:14px;right:592.80px;">0 B</span>
<svg style="left:0;top:0" width="1280" height="621" viewBox="0 0 1280 621"><path d="M690.25 338.66 L716.00 338.66 L742.00 337.99 L790.00 338.40 L830.00 338.80 L1000.00 338.80 L1030.00 339.60 L1190.00 339.60 L1215.00 338.93 L1239.80 338.93 L1239.8 366 L690.25 366 Z" fill="rgb(117,100,32)"/><path d="M690.25 280.05 L718.00 280.05 L745.00 278.15 L770.00 278.58 L900.00 279.44 L1000.00 279.17 L1100.00 278.36 L1180.00 278.10 L1200.00 278.63 L1239.80 278.10 L1239.80 338.93 L1215.00 338.93 L1190.00 339.60 L1030.00 339.60 L1000.00 338.80 L830.00 338.80 L790.00 338.40 L742.00 337.99 L716.00 338.66 L690.25 338.66 Z" fill="rgb(18,34,56)"/><path d="M690.25 265.50 H1239.8 L1239.80 278.10 L1200.00 278.63 L1180.00 278.10 L1100.00 278.36 L1000.00 279.17 L900.00 279.44 L770.00 278.58 L745.00 278.15 L718.00 280.05 L690.25 280.05 Z" fill="rgb(68,96,66)"/><path d="M716.60 255.75V369.00" stroke="rgba(204,204,220,0.06)" stroke-width="1"/><path d="M816.35 255.75V369.00" stroke="rgba(204,204,220,0.06)" stroke-width="1"/><path d="M916.10 255.75V369.00" stroke="rgba(204,204,220,0.06)" stroke-width="1"/><path d="M1015.85 255.75V369.00" stroke="rgba(204,204,220,0.06)" stroke-width="1"/><path d="M1115.60 255.75V369.00" stroke="rgba(204,204,220,0.06)" stroke-width="1"/><path d="M1215.35 255.75V369.00" stroke="rgba(204,204,220,0.06)" stroke-width="1"/><path d="M690.25 258.75H1259.00" stroke="rgba(204,204,220,0.06)" stroke-width="1"/><path d="M690.25 272.15H1259.00" stroke="rgba(204,204,220,0.06)" stroke-width="1"/><path d="M690.25 285.55H1259.00" stroke="rgba(204,204,220,0.06)" stroke-width="1"/><path d="M690.25 298.95H1259.00" stroke="rgba(204,204,220,0.06)" stroke-width="1"/><path d="M690.25 312.35H1259.00" stroke="rgba(204,204,220,0.06)" stroke-width="1"/><path d="M690.25 325.75H1259.00" stroke="rgba(204,204,220,0.06)" stroke-width="1"/><path d="M690.25 339.15H1259.00" stroke="rgba(204,204,220,0.06)" stroke-width="1"/><path d="M690.25 352.55H1259.00" stroke="rgba(204,204,220,0.06)" stroke-width="1"/><path d="M690.25 365.95H1259.00" stroke="rgba(204,204,220,0.06)" stroke-width="1"/><path d="M690.25 338.66 L716.00 338.66 L742.00 337.99 L790.00 338.40 L830.00 338.80 L1000.00 338.80 L1030.00 339.60 L1190.00 339.60 L1215.00 338.93 L1239.80 338.93" fill="none" stroke="rgb(190,160,40)" stroke-width="0.9"/><path d="M690.25 280.05 L718.00 280.05 L745.00 278.15 L770.00 278.58 L900.00 279.44 L1000.00 279.17 L1100.00 278.36 L1180.00 278.10 L1200.00 278.63 L1239.80 278.10" fill="none" stroke="rgb(20,48,84)" stroke-width="0.9"/><path d="M690.25 266.35H1239.8" stroke="rgb(170,160,90)" stroke-width="0.6"/><path d="M690.25 265.4H1239.8" stroke="rgb(212,42,20)" stroke-width="1.15"/><path d="M746 253.75V369" stroke="rgba(204,204,220,0.13)" stroke-width="1" stroke-dasharray="2 2"/><circle cx="742" cy="337.99" r="2.7" fill="rgb(242,204,12)" fill-opacity="0.9"/></svg>
<span id="t69" style="top:369.20px;font-size:9.5px;font-weight:400;color:rgb(204,204,220);line-height:14px;letter-spacing:0.431px;left:566.97px;width:300px;text-align:center;">05:09:00</span>
<span id="t70" style="top:369.20px;font-size:9.5px;font-weight:400;color:rgb(204,204,220);line-height:14px;letter-spacing:0.217px;left:666.61px;width:300px;text-align:center;">05:10:00</span>
<span id="t71" style="top:369.20px;font-size:9.5px;font-weight:400;color:rgb(204,204,220);line-height:14px;letter-spacing:0.103px;left:766.30px;width:300px;text-align:center;">05:11:00</span>
<span id="t72" style="top:369.20px;font-size:9.5px;font-weight:400;color:rgb(204,204,220);line-height:14px;letter-spacing:0.145px;left:866.07px;width:300px;text-align:center;">05:12:00</span>
<span id="t73" style="top:369.20px;font-size:9.5px;font-weight:400;color:rgb(204,204,220);line-height:14px;letter-spacing:0.145px;left:965.82px;width:300px;text-align:center;">05:13:00</span>
<span id="t74" style="top:369.20px;font-size:9.5px;font-weight:400;color:rgb(204,204,220);line-height:14px;letter-spacing:0.145px;left:1065.57px;width:300px;text-align:center;">05:14:00</span>
<div style="left:650.00px;top:394.40px;width:10.8px;height:3px;border-radius:1.5px;background:#E0F9D7"></div>
<span id="t75" style="top:388.80px;font-size:9.5px;font-weight:400;color:rgb(204,204,220);line-height:14px;letter-spacing:0.168px;left:666.00px;">RAM Total</span>
<div style="left:719.00px;top:394.40px;width:10.8px;height:3px;border-radius:1.5px;background:#F2CC0C"></div>
<span id="t76" style="top:388.80px;font-size:9.5px;font-weight:400;color:rgb(204,204,220);line-height:14px;left:735.00px;">RAM Used</span>
<div style="left:789.00px;top:394.40px;width:10.8px;height:3px;border-radius:1.5px;background:#052B51"></div>
<span id="t77" style="top:388.80px;font-size:9.5px;font-weight:400;color:rgb(204,204,220);line-height:14px;letter-spacing:0.164px;left:806.00px;">RAM Cache + Buffer</span>
<div style="left:904.00px;top:394.40px;width:10.8px;height:3px;border-radius:1.5px;background:#7EB26D"></div>
<span id="t78" style="top:388.80px;font-size:9.5px;font-weight:400;color:rgb(204,204,220);line-height:14px;letter-spacing:-0.114px;left:920.00px;">RAM Free</span>
<div style="left:970.50px;top:394.40px;width:10.8px;height:3px;border-radius:1.5px;background:#DE2D0B"></div>
<span id="t79" style="top:388.80px;font-size:9.5px;font-weight:400;color:rgb(204,204,220);line-height:14px;letter-spacing:-0.035px;left:987.00px;">SWAP Used</span>
<div style="left:2.00px;top:419.20px;width:631.80px;height:196.00px;background:#181b1f;border:1px solid #25272d;border-radius:4px;"></div>
<span id="t80" style="top:424.90px;font-size:10.6px;font-weight:400;color:rgb(204,204,220);line-height:14px;letter-spacing:0.685px;-webkit-text-stroke:0.32px rgb(204,204,220);left:9.00px;">Network Traffic Basic</span>
<span id="t81" style="top:462.10px;font-size:9.7px;font-weight:400;color:rgb(204,204,220);line-height:14px;letter-spacing:0.434px;right:1235.27px;">0 b/s</span>
<span id="t82" style="top:483.50px;font-size:9.7px;font-weight:400;color:rgb(204,204,220);line-height:14px;letter-spacing:0.487px;right:1235.21px;">-2 kb/s</span>
<span id="t83" style="top:504.90px;font-size:9.7px;font-weight:400;color:rgb(204,204,220);line-height:14px;letter-spacing:0.487px;right:1235.21px;">-4 kb/s</span>
<span id="t84" style="top:526.30px;font-size:9.7px;font-weight:400;color:rgb(204,204,220);line-height:14px;letter-spacing:0.487px;right:1235.21px;">-6 kb/s</span>
<span id="t85" style="top:547.70px;font-size:9.7px;font-weight:400;color:rgb(204,204,220);line-height:14px;letter-spacing:0.487px;right:1235.21px;">-8 kb/s</span>
<svg style="left:0;top:0" width="1280" height="621" viewBox="0 0 1280 621"><rect x="48" y="470" width="554" height="88.7" fill="rgb(52,76,120)"/><rect x="48" y="465.4" width="554" height="4.3" fill="rgb(74,128,72)"/><path d="M48 465.4H602" stroke="rgb(115,191,105)" stroke-width="0.8"/><path d="M74.50 456.00V562.00" stroke="rgba(204,204,220,0.06)" stroke-width="1"/><path d="M174.70 456.00V562.00" stroke="rgba(204,204,220,0.06)" stroke-width="1"/><path d="M274.90 456.00V562.00" stroke="rgba(204,204,220,0.06)" stroke-width="1"/><path d="M375.10 456.00V562.00" stroke="rgba(204,204,220,0.06)" stroke-width="1"/><path d="M475.30 456.00V562.00" stroke="rgba(204,204,220,0.06)" stroke-width="1"/><path d="M575.50 456.00V562.00" stroke="rgba(204,204,220,0.06)" stroke-width="1"/><path d="M48.00 469.50H624.00" stroke="rgba(204,204,220,0.06)" stroke-width="1"/><path d="M48.00 490.90H624.00" stroke="rgba(204,204,220,0.06)" stroke-width="1"/><path d="M48.00 512.30H624.00" stroke="rgba(204,204,220,0.06)" stroke-width="1"/><path d="M48.00 533.70H624.00" stroke="rgba(204,204,220,0.06)" stroke-width="1"/><path d="M48.00 555.10H624.00" stroke="rgba(204,204,220,0.06)" stroke-width="1"/><path d="M48 470.1H602" stroke="rgb(224,150,60)" stroke-width="1.3"/><path d="M48 558.7H602" stroke="rgb(87,148,242)" stroke-width="1.1"/><path d="M103 456V565" stroke="rgba(204,204,220,0.13)" stroke-width="1" stroke-dasharray="2 2"/><circle cx="100.5" cy="558.6" r="3" fill="rgb(87,148,242)" fill-opacity="0.9"/></svg>
<span id="t86" style="top:571.80px;font-size:9.5px;font-weight:400;color:rgb(204,204,220);line-height:14px;letter-spacing:0.431px;left:-75.18px;width:300px;text-align:center;">05:09:00</span>
<span id="t87" style="top:571.80px;font-size:9.5px;font-weight:400;color:rgb(204,204,220);line-height:14px;letter-spacing:0.217px;left:24.91px;width:300px;text-align:center;">05:10:00</span>
<span id="t88" style="top:571.80px;font-size:9.5px;font-weight:400;color:rgb(204,204,220);line-height:14px;letter-spacing:0.103px;left:125.05px;width:300px;text-align:center;">05:11:00</span>
<span id="t89" style="top:571.80px;font-size:9.5px;font-weight:400;color:rgb(204,204,220);line-height:14px;letter-spacing:0.145px;left:225.27px;width:300px;text-align:center;">05:12:00</span>
<span id="t90" style="top:571.80px;font-size:9.5px;font-weight:400;color:rgb(204,204,220);line-height:14px;letter-spacing:0.145px;left:325.47px;width:300px;text-align:center;">05:13:00</span>
<span id="t91" style="top:571.80px;font-size:9.5px;font-weight:400;color:rgb(204,204,220);line-height:14px;letter-spacing:0.145px;left:425.67px;width:300px;text-align:center;">05:14:00</span>
<div style="left:12.20px;top:597.50px;width:10.8px;height:3px;border-radius:1.5px;background:#73BF69"></div>
<span id="t92" style="top:591.90px;font-size:9.5px;font-weight:400;color:rgb(204,204,220);line-height:14px;letter-spacing:0.240px;left:29.00px;">recv eth0</span>
<div style="left:78.00px;top:597.50px;width:10.8px;height:3px;border-radius:1.5px;background:#F2CC0C"></div>
<span id="t93" style="top:591.90px;font-size:9.5px;font-weight:400;color:rgb(204,204,220);line-height:14px;letter-spacing:0.169px;left:95.00px;">recv lo</span>
<div style="left:132.00px;top:597.50px;width:10.8px;height:3px;border-radius:1.5px;background:#5794F2"></div>
<span id="t94" style="top:591.90px;font-size:9.5px;font-weight:400;color:rgb(204,204,220);line-height:14px;letter-spacing:0.194px;left:149.00px;">trans eth0</span>
<div style="left:201.00px;top:597.50px;width:10.8px;height:3px;border-radius:1.5px;background:#FF9830"></div>
<span id="t95" style="top:591.90px;font-size:9.5px;font-weight:400;color:rgb(204,204,220);line-height:14px;letter-spacing:0.121px;left:218.00px;">trans lo</span>
<div style="left:639.80px;top:419.20px;width:631.80px;height:196.00px;background:#181b1f;border:1px solid #25272d;border-radius:4px;"></div>
<span id="t96" style="top:424.90px;font-size:10.6px;font-weight:400;color:rgb(204,204,220);line-height:14px;letter-spacing:0.420px;-webkit-text-stroke:0.32px rgb(204,204,220);left:646.80px;">Disk Space Used Basic</span>
<svg style="left:777.80px;top:425.60px;" width="12.00" height="12.00" viewBox="0 0 12.00 12.00"><circle cx="6" cy="6" r="4.4" fill="none" stroke="rgba(204,204,220,0.65)" stroke-width="1"/><path d="M6 5.6V8" stroke="rgba(204,204,220,0.65)" stroke-width="1.1" stroke-linecap="round"/><circle cx="6" cy="4" r="0.65" fill="rgba(204,204,220,0.65)"/></svg>
<span id="t97" style="top:449.20px;font-size:9.6px;font-weight:400;color:rgb(204,204,220);line-height:14px;right:606.80px;">100%</span>
<span id="t98" style="top:468.10px;font-size:9.6px;font-weight:400;color:rgb(204,204,220);line-height:14px;right:606.80px;">80%</span>
<span id="t99" style="top:487.00px;font-size:9.6px;font-weight:400;color:rgb(204,204,220);line-height:14px;right:606.80px;">60%</span>
<span id="t100" style="top:505.90px;font-size:9.6px;font-weight:400;color:rgb(204,204,220);line-height:14px;right:606.80px;">40%</span>
<span id="t101" style="top:524.80px;font-size:9.6px;font-weight:400;color:rgb(204,204,220);line-height:14px;right:606.80px;">20%</span>
<span id="t102" style="top:543.70px;font-size:9.6px;font-weight:400;color:rgb(204,204,220);line-height:14px;right:606.80px;">0%</span>
<svg style="left:0;top:0" width="1280" height="621" viewBox="0 0 1280 621"><rect x="677.25" y="536.4" width="561.75" height="14.0" fill="rgb(63,92,60)"/><path d="M677.25 536.4H1239" stroke="rgb(96,150,88)" stroke-width="0.8"/><path d="M705.25 456.20V553.70" stroke="rgba(204,204,220,0.06)" stroke-width="1"/><path d="M806.55 456.20V553.70" stroke="rgba(204,204,220,0.06)" stroke-width="1"/><path d="M907.85 456.20V553.70" stroke="rgba(204,204,220,0.06)" stroke-width="1"/><path d="M1009.15 456.20V553.70" stroke="rgba(204,204,220,0.06)" stroke-width="1"/><path d="M1110.45 456.20V553.70" stroke="rgba(204,204,220,0.06)" stroke-width="1"/><path d="M1211.75 456.20V553.70" stroke="rgba(204,204,220,0.06)" stroke-width="1"/><path d="M677.25 456.20H1258.50" stroke="rgba(204,204,220,0.06)" stroke-width="1"/><path d="M677.25 475.10H1258.50" stroke="rgba(204,204,220,0.06)" stroke-width="1"/><path d="M677.25 494.00H1258.50" stroke="rgba(204,204,220,0.06)" stroke-width="1"/><path d="M677.25 512.90H1258.50" stroke="rgba(204,204,220,0.06)" stroke-width="1"/><path d="M677.25 531.80H1258.50" stroke="rgba(204,204,220,0.06)" stroke-width="1"/><path d="M677.25 550.70H1258.50" stroke="rgba(204,204,220,0.06)" stroke-width="1"/><path d="M677.25 550.7H1239" stroke="rgb(200,190,30)" stroke-width="1.3"/><path d="M733.5 452.2V553.7" stroke="rgba(204,204,220,0.13)" stroke-width="1" stroke-dasharray="2 2"/><circle cx="731" cy="550.6" r="3" fill="rgb(242,204,12)" fill-opacity="0.9"/></svg>
<span id="t103" style="top:554.40px;font-size:9.5px;font-weight:400;color:rgb(204,204,220);line-height:14px;letter-spacing:0.431px;left:555.12px;width:300px;text-align:center;">05:09:00</span>
<span id="t104" style="top:554.40px;font-size:9.5px;font-weight:400;color:rgb(204,204,220);line-height:14px;letter-spacing:0.217px;left:656.31px;width:300px;text-align:center;">05:10:00</span>
<span id="t105" style="top:554.40px;font-size:9.5px;font-weight:400;color:rgb(204,204,220);line-height:14px;letter-spacing:0.103px;left:757.55px;width:300px;text-align:center;">05:11:00</span>
<span id="t106" style="top:554.40px;font-size:9.5px;font-weight:400;color:rgb(204,204,220);line-height:14px;letter-spacing:0.145px;left:858.87px;width:300px;text-align:center;">05:12:00</span>
<span id="t107" style="top:554.40px;font-size:9.5px;font-weight:400;color:rgb(204,204,220);line-height:14px;letter-spacing:0.145px;left:960.17px;width:300px;text-align:center;">05:13:00</span>
<span id="t108" style="top:554.40px;font-size:9.5px;font-weight:400;color:rgb(204,204,220);line-height:14px;letter-spacing:0.145px;left:1061.47px;width:300px;text-align:center;">05:14:00</span>
<div style="left:649.80px;top:579.20px;width:10.8px;height:3px;border-radius:1.5px;background:#73BF69"></div>
<span id="t109" style="top:573.60px;font-size:9.5px;font-weight:400;color:rgb(204,204,220);line-height:14px;left:666.00px;">/</span>
<div style="left:677.30px;top:579.20px;width:10.8px;height:3px;border-radius:1.5px;background:#F2CC0C"></div>
<span id="t110" style="top:573.60px;font-size:9.5px;font-weight:400;color:rgb(204,204,220);line-height:14px;letter-spacing:0.375px;left:694.00px;">/run</span>
<div style="left:720.20px;top:579.20px;width:10.8px;height:3px;border-radius:1.5px;background:#5794F2"></div>
<span id="t111" style="top:573.60px;font-size:9.5px;font-weight:400;color:rgb(204,204,220);line-height:14px;letter-spacing:0.254px;left:736.50px;">/run/credentials/getty@tty1.service</span>
<div style="left:898.00px;top:579.20px;width:10.8px;height:3px;border-radius:1.5px;background:#FF9830"></div>
<span id="t112" style="top:573.60px;font-size:9.5px;font-weight:400;color:rgb(204,204,220);line-height:14px;letter-spacing:0.326px;left:914.80px;">/run/credentials/systemd-journald.service</span>
<div style="left:1109.00px;top:579.20px;width:10.8px;height:3px;border-radius:1.5px;background:#F2495C"></div>
<span id="t113" style="top:573.60px;font-size:9.5px;font-weight:400;color:rgb(204,204,220);line-height:14px;letter-spacing:0.324px;left:1125.50px;">/run/lock</span>
<div style="left:649.80px;top:597.50px;width:10.8px;height:3px;border-radius:1.5px;background:#B877D9"></div>
<span id="t114" style="top:591.90px;font-size:9.5px;font-weight:400;color:rgb(204,204,220);line-height:14px;letter-spacing:0.287px;left:666.00px;">/run/user/1000</span>
<div style="left:740.00px;top:597.50px;width:10.8px;height:3px;border-radius:1.5px;background:#37872D"></div>
<span id="t115" style="top:591.90px;font-size:9.5px;font-weight:400;color:rgb(204,204,220);line-height:14px;letter-spacing:0.505px;left:756.00px;">/tmp</span>
<div style="left:103.5px;top:367px;width:125.5px;height:130px;background:#22252b;border:1px solid #2f3238;border-radius:4px;box-shadow:0 3px 9px rgba(0,0,0,0.55)"></div>
<div style="left:104.5px;top:390.3px;width:123.5px;height:1px;background:#2f3238"></div>
<span id="t116" style="top:372.00px;font-size:9.8px;font-weight:400;color:rgb(204,204,220);line-height:14px;letter-spacing:0.223px;-webkit-text-stroke:0.32px rgb(204,204,220);left:110.00px;">2026-01-02 05:09:15</span>
<div style="left:110.2px;top:403.20px;width:10.8px;height:3px;border-radius:1.5px;background:#73BF69"></div>
<span id="t117" style="top:397.60px;font-size:9.6px;font-weight:400;color:rgba(204,204,220,0.55);line-height:14px;left:128.50px;">Idle</span>
<span id="t118" style="top:397.60px;font-size:9.7px;font-weight:400;color:rgb(204,204,220);line-height:14px;letter-spacing:0.383px;-webkit-text-stroke:0.32px rgb(204,204,220);right:1058.12px;">89.4%</span>
<div style="left:110.2px;top:418.93px;width:10.8px;height:3px;border-radius:1.5px;background:#0A437C"></div>
<span id="t119" style="top:413.33px;font-size:9.6px;font-weight:700;color:#ffffff;line-height:14px;left:128.50px;">Busy User</span>
<span id="t120" style="top:413.33px;font-size:9.7px;font-weight:400;color:rgb(204,204,220);line-height:14px;letter-spacing:0.208px;right:1058.29px;">8.47%</span>
<div style="left:110.2px;top:434.66px;width:10.8px;height:3px;border-radius:1.5px;background:#EAB839"></div>
<span id="t121" style="top:429.06px;font-size:9.6px;font-weight:400;color:rgba(204,204,220,0.55);line-height:14px;left:128.50px;">Busy System</span>
<span id="t122" style="top:429.06px;font-size:9.7px;font-weight:400;color:rgb(204,204,220);line-height:14px;letter-spacing:-0.142px;-webkit-text-stroke:0.32px rgb(204,204,220);right:1058.64px;">1.40%</span>
<div style="left:110.2px;top:450.39px;width:10.8px;height:3px;border-radius:1.5px;background:#890F02"></div>
<span id="t123" style="top:444.79px;font-size:9.6px;font-weight:400;color:rgba(204,204,220,0.55);line-height:14px;left:128.50px;">Busy Iowait</span>
<span id="t124" style="top:444.79px;font-size:9.7px;font-weight:400;color:rgb(204,204,220);line-height:14px;letter-spacing:0.288px;-webkit-text-stroke:0.32px rgb(204,204,220);right:1058.21px;">0.383%</span>
<div style="left:110.2px;top:466.12px;width:10.8px;height:3px;border-radius:1.5px;background:#FF9830"></div>
<span id="t125" style="top:460.52px;font-size:9.6px;font-weight:400;color:rgba(204,204,220,0.55);line-height:14px;left:128.50px;">Busy IRQs</span>
<span id="t126" style="top:460.52px;font-size:9.7px;font-weight:400;color:rgb(204,204,220);line-height:14px;letter-spacing:0.325px;-webkit-text-stroke:0.32px rgb(204,204,220);right:1058.17px;">0.0333%</span>
<div style="left:110.2px;top:481.85px;width:10.8px;height:3px;border-radius:1.5px;background:#8a1a86"></div>
<span id="t127" style="top:476.25px;font-size:9.6px;font-weight:400;color:rgba(204,204,220,0.55);line-height:14px;left:128.50px;">Busy Other</span>
<span id="t128" style="top:476.25px;font-size:9.7px;font-weight:400;color:rgb(204,204,220);line-height:14px;letter-spacing:0.484px;-webkit-text-stroke:0.32px rgb(204,204,220);right:1058.02px;">0%</span></body></html>
